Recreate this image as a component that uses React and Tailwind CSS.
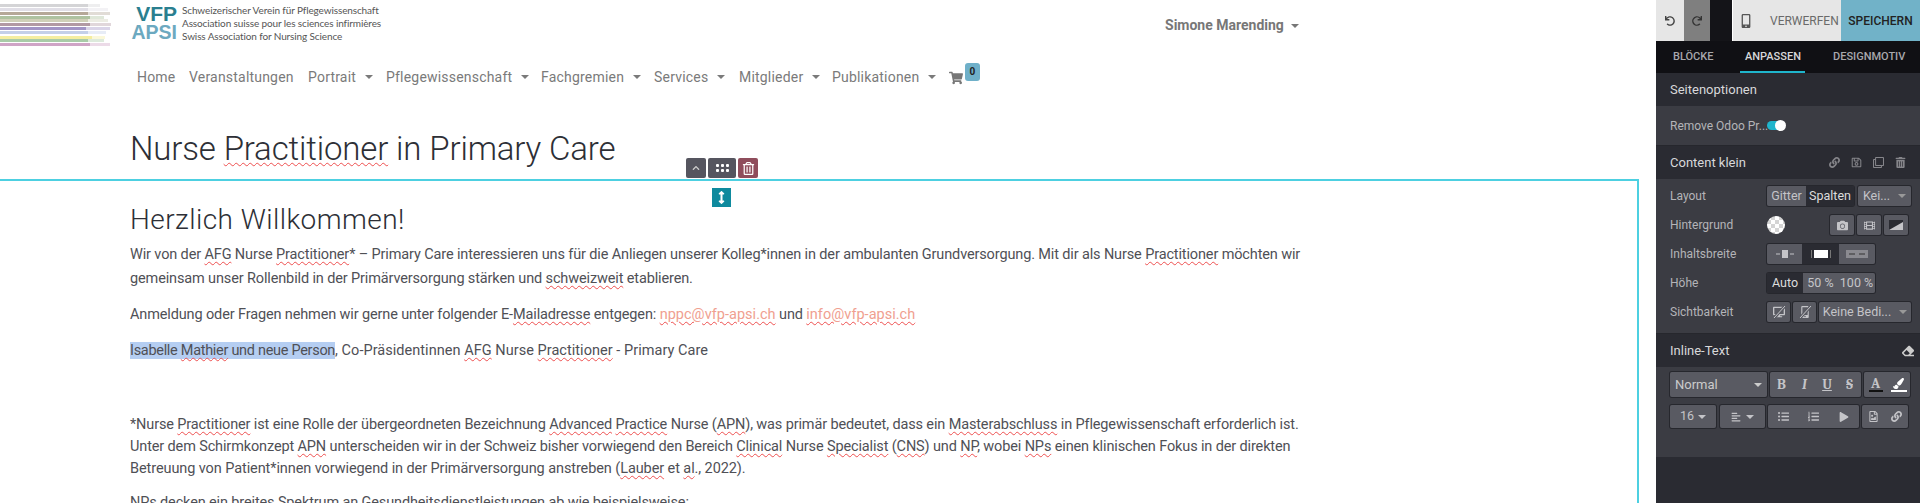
import {
  FaUndo, FaRedo, FaMobileAlt, FaShoppingCart, FaLink, FaRegSave, FaRegClone, FaTrashAlt, FaRegTrashAlt, FaCamera, FaFilm,
  FaEraser, FaListUl, FaListOl, FaPlay, FaAlignLeft,
  FaRegFileImage, FaChevronUp, FaArrowsAltV, FaPaintBrush, FaDesktop,
} from "react-icons/fa";

const font = { fontFamily: "Roboto, sans-serif" };

// colour, y, solid width, faded width
const stripes = [
  ["#d4d4d6", 4, 88, 100], ["#e0dee6", 8, 88, 108], ["#b5a898", 12, 88, 110], ["#aec2a0", 16, 90, 104], ["#d0d0b8", 19, 88, 108],
  ["#b39aa4", 23, 90, 111], ["#a294c6", 27, 86, 110], ["#c4d0e8", 31, 88, 106], ["#f4eea0", 36, 92, 105],
  ["#a9cba8", 39, 88, 104], ["#cfa4c6", 43, 90, 110],
];

function Sp({ children }) {
  return <span className="underline decoration-wavy decoration-[#ee4f4f] decoration-1 underline-offset-2">{children}</span>;
}

function Caret({ className = "" }) {
  return <span className={`inline-block border-x-[4px] border-t-[4px] border-x-transparent border-t-current ${className}`} />;
}

function NavItem({ label, caret, className = "" }) {
  return (
    <span className={`flex items-center gap-[9px] whitespace-nowrap ${className}`}>
      {label}
      {caret && <Caret />}
    </span>
  );
}

function Header() {
  return (
    <>
      <div className="h-[51px] flex items-start relative">
        <svg width="112" height="46" className="shrink-0">
          {stripes.map(([c, y, w, w2]) => (
            <g key={y}>
              <rect x="0" y={y} width={w2} height="3" fill={c} opacity="0.4" />
              <rect x="0" y={y} width={w} height="3" fill={c} />
            </g>
          ))}
        </svg>
        <div className="ml-[16px] w-[50px] shrink-0 font-bold text-right" style={{ fontFamily: "Liberation Sans, sans-serif" }}>
          <div className="text-[#2a7f8f] text-[21px] leading-[18px] mt-[5px] pr-[1px]">VFP</div>
          <div className="text-[#6ca9c0] text-[19.5px] leading-[18px] pr-[1px]">APSI</div>
        </div>
        <div className="ml-[4px] mt-[4px] text-[#555] text-[10px] leading-[13px] tracking-[-0.12px] whitespace-nowrap" style={{ fontFamily: "Lato, sans-serif" }}>
          <div>Schweizerischer Verein für Pflegewissenschaft</div>
          <div>Association suisse pour les sciences infirmières</div>
          <div>Swiss Association for Nursing Science</div>
        </div>
        <div className="ml-[784px] mt-[15px] flex items-center gap-[7px] text-[14px] font-bold text-[#777]">
          Simone Marending
          <Caret />
        </div>
      </div>
      <nav className="h-[50px] pl-[137px] pt-[17px] flex items-start text-[14px] leading-[18px] text-[#7a7a7a] tracking-[0.2px]">
        <NavItem label="Home" className="w-[52px]" />
        <NavItem label="Veranstaltungen" className="w-[119px]" />
        <NavItem label="Portrait" caret className="w-[78px]" />
        <NavItem label="Pflegewissenschaft" caret className="w-[155px]" />
        <NavItem label="Fachgremien" caret className="w-[113px]" />
        <NavItem label="Services" caret className="w-[85px]" />
        <NavItem label="Mitglieder" caret className="w-[93px]" />
        <NavItem label="Publikationen" caret className="w-[117px]" />
        <span className="relative">
          <FaShoppingCart className="text-[14px] mt-[3px] text-[#777]" />
          <span className="absolute left-[16px] top-[-5px] w-[15px] h-[18px] rounded-[3px] bg-[#6fb0c9] text-[#222] text-[10px] leading-[18px] font-bold text-center">0</span>
        </span>
      </nav>
      <h1 className="h-[78px] pl-[130px] pt-[26px] text-[33px] font-light leading-[44px] text-[#2d2f36] tracking-[-0.15px] whitespace-nowrap">
        Nurse <Sp>Practitioner</Sp> in Primary Care
      </h1>
    </>
  );
}

function Section() {
  return (
    <section className="relative w-[1639px] h-[324px] border-t-2 border-r-2 border-[#4dd0e1] pl-[130px] whitespace-nowrap text-[14.5px] leading-[24px] text-[#4f5056] tracking-[-0.135px]">
      <div className="absolute left-[686px] top-[-23px] flex gap-[2px] text-white">
        <button className="w-[20px] h-[20px] rounded-[2px] bg-[#55555f] flex items-center justify-center text-[#ccc]"><FaChevronUp size={8} /></button>
        <button className="w-[28px] h-[20px] rounded-[2px] bg-[#55555f] flex items-center justify-center">
          <svg width="13" height="9" fill="currentColor">
            <rect x="0" y="0" width="3" height="3" rx="1" /><rect x="5" y="0" width="3" height="3" rx="1" /><rect x="10" y="0" width="3" height="3" rx="1" />
            <rect x="0" y="5" width="3" height="3" rx="1" /><rect x="5" y="5" width="3" height="3" rx="1" /><rect x="10" y="5" width="3" height="3" rx="1" />
          </svg>
        </button>
        <button className="w-[20px] h-[20px] rounded-[2px] bg-[#8f4d5c] flex items-center justify-center"><FaRegTrashAlt size={13} /></button>
      </div>
      <div className="absolute left-[712px] top-[7px] w-[19px] h-[19px] bg-[#0e8a9e] flex items-center justify-center text-white">
        <FaArrowsAltV size={13} />
      </div>
      <h2 className="pt-[21px] text-[28px] font-light leading-[36px] text-[#2d2f36] tracking-[0.45px]">Herzlich Willkommen!</h2>
      <p className="mt-[5px] mb-[12px]">
        Wir von der <Sp>AFG</Sp> Nurse <Sp>Practitioner</Sp>* – Primary Care interessieren uns für die Anliegen unserer Kolleg*innen in der ambulanten Grundversorgung. Mit dir als Nurse <Sp>Practitioner</Sp> möchten wir
        <br />
        gemeinsam unser Rollenbild in der Primärversorgung stärken und <Sp>schweizweit</Sp> etablieren.
      </p>
      <p className="mb-[12px]">
        Anmeldung oder Fragen nehmen wir gerne unter folgender E-<Sp>Mailadresse</Sp> entgegen: <span className="text-[#f0a090] tracking-[0.02px]"><Sp>nppc@vfp-apsi.ch</Sp></span> und <span className="text-[#f0a090] tracking-[0.02px]"><Sp>info@vfp-apsi.ch</Sp></span>
      </p>
      <p className="mb-[12px]">
        <span className="bg-[#b5cef2] tracking-[-0.3px]">Isabelle <Sp>Mathier</Sp> und neue Person</span>
        <span className="tracking-[0.04px]">, Co-Präsidentinnen <Sp>AFG</Sp> Nurse <Sp>Practitioner</Sp> - Primary Care</span>
      </p>
      <p className="h-[24px] mb-[15px]" />
      <p className="mb-[11px] leading-[22px]">
        *Nurse <Sp>Practitioner</Sp> ist eine Rolle der übergeordneten Bezeichnung <Sp>Advanced</Sp> <Sp>Practice</Sp> Nurse (<Sp>APN</Sp>), was primär bedeutet, dass ein <Sp>Masterabschluss</Sp> in Pflegewissenschaft erforderlich ist.
        <br />
        Unter dem Schirmkonzept <Sp>APN</Sp> unterscheiden wir in der Schweiz bisher vorwiegend den Bereich <Sp>Clinical</Sp> Nurse <Sp>Specialist</Sp> (<Sp>CNS</Sp>) und <Sp>NP</Sp>, wobei <Sp>NPs</Sp> einen klinischen Fokus in der direkten
        <br />
        <span className="tracking-[-0.09px]">Betreuung von Patient*innen vorwiegend in der Primärversorgung anstreben (<Sp>Lauber</Sp> et <Sp>al</Sp>., 2022).</span>
      </p>
      <p>NPs decken ein breites Spektrum an Gesundheitsdienstleistungen ab wie beispielsweise:</p>
    </section>
  );
}

function Btn({ children, className = "", active }) {
  return (
    <button className={`h-full flex items-center text-[12.5px] whitespace-nowrap ${active ? "bg-[#2a2b32] text-[#ddd]" : "bg-[#595a62] text-[#c4c4c8]"} ${className} justify-center`}>
      {children}
    </button>
  );
}

function Group({ children, className = "" }) {
  return <div className={`flex h-full rounded-[2px] overflow-hidden shadow-[0_0_0_1px_#26272d] ${className}`}>{children}</div>;
}

function Row({ label, children }) {
  return (
    <div className="h-[20px] mb-[9px] flex items-center">
      <span className="w-[97px] text-[12px] text-[#b4b4b8]">{label}</span>
      <div className="flex h-full gap-[3px] flex-1">{children}</div>
    </div>
  );
}

function SectionHead({ title, children }) {
  return (
    <div className="h-[33px] bg-[#2a2b32] px-[14px] flex items-center justify-between text-[13px] text-[#d8d8da]">
      {title}
      {children}
    </div>
  );
}

function Slashed({ children }) {
  return (
    <span className="relative flex items-center justify-center">
      {children}
      <svg width="14" height="14" className="absolute">
        <path d="M2 13 L13 1" stroke="#595a62" strokeWidth="3" />
        <path d="M2 13 L13 1" stroke="#c4c4c8" strokeWidth="1" />
      </svg>
    </span>
  );
}

function Sidebar() {
  return (
    <aside className="w-[264px] shrink-0 h-[503px] bg-[#2a2b32] flex flex-col overflow-hidden">
      <div className="h-[41px] flex bg-white">
        <button className="w-[28px] bg-[#e6e6e6] flex items-center justify-center text-[#444]"><FaUndo size={10} /></button>
        <button className="w-[26px] bg-[#7f7f7f] flex items-center justify-center text-[#333]"><FaRedo size={10} /></button>
        <div className="w-[22px] bg-[#141418]" />
        <div className="w-[1px] bg-white" />
        <div className="flex-1 bg-[#e6e6e6] flex items-center text-[12px] text-[#6a6a6a] whitespace-nowrap">
          <FaMobileAlt size={14} className="ml-[6px] mr-[17px] text-[#555]" />
          VERWERFEN
        </div>
        <div className="w-[79px] bg-[#71b2c8] flex items-center justify-center text-[12px] text-[#222] font-medium">SPEICHERN</div>
      </div>
      <div className="h-[32px] bg-[#101014] flex items-center text-[11px] font-medium text-[#a8a8ac] relative whitespace-nowrap">
        <span className="ml-[17px] w-[72px]">BLÖCKE</span>
        <span className="w-[88px] text-[#d8d8da]">ANPASSEN</span>
        <span>DESIGNMOTIV</span>
        <span className="absolute left-[84px] bottom-0 w-[65px] h-[2px] bg-[#1fb5cc]" />
      </div>
      <SectionHead title="Seitenoptionen" />
      <div className="h-[40px] bg-[#3b3c43] border-b border-[#26272d] px-[14px] flex items-center text-[12px] text-[#b4b4b8] whitespace-nowrap">
        <span className="w-[97px]">Remove Odoo Pr...</span>
        <span className="relative w-[18px] h-[9px] rounded-full bg-[#1fb5cc]">
          <span className="absolute right-[-1px] top-[-1px] w-[11px] h-[11px] rounded-full bg-white" />
        </span>
      </div>
      <SectionHead title="Content klein">
        <span className="flex gap-[11px] text-[#85858a]">
          <FaLink size={11} />
          <FaRegSave size={11} />
          <FaRegClone size={11} />
          <FaTrashAlt size={11} />
        </span>
      </SectionHead>
      <div className="h-[155px] bg-[#3b3c43] border-b border-[#26272d] px-[14px] pr-[9px] pt-[7px]">
        <Row label="Layout">
          <Group>
            <Btn className="w-[39px]">Gitter</Btn>
            <Btn className="w-[48px]" active>Spalten</Btn>
          </Group>
          <Group className="ml-[1px]">
            <Btn className="w-[53px] gap-[8px]">Kei... <Caret className="text-[#999]" /></Btn>
          </Group>
        </Row>
        <Row label="Hintergrund">
          <span className="w-[18px] h-[18px] mt-[1px] rounded-full bg-[repeating-conic-gradient(#d4d4d4_0_25%,#ffffff_0_50%)] bg-[length:8px_8px]" />
          <Group className="ml-[42px]"><Btn className="w-[24px]"><FaCamera size={11} /></Btn></Group>
          <Group><Btn className="w-[24px]"><FaFilm size={11} /></Btn></Group>
          <Group><Btn className="w-[24px]"><svg width="14" height="10"><rect width="14" height="10" fill="#2a2b32" /><path d="M0 10 L14 2 V10Z" fill="#c4c4c8" /></svg></Btn></Group>
        </Row>
        <Row label="Inhaltsbreite">
          <Group>
            <Btn className="w-[35px]"><svg width="20" height="8"><rect x="7" y="0" width="6" height="8" fill="currentColor" /><path d="M1 4h4M15 4h4" stroke="currentColor" /></svg></Btn>
            <Btn className="w-[37px]" active><svg width="20" height="8"><rect x="3" y="0" width="14" height="8" fill="#fff" /><path d="M.5 0v8M19.5 0v8" stroke="#777" /></svg></Btn>
            <Btn className="w-[36px]"><svg width="22" height="8"><rect x="0" y="0" width="22" height="8" fill="#8a8a90" /><path d="M3 4h6M13 4h6" stroke="#333" /></svg></Btn>
          </Group>
        </Row>
        <Row label="Höhe">
          <Group>
            <Btn className="w-[36px]" active>Auto</Btn>
            <Btn className="w-[35px]">50 %</Btn>
            <Btn className="w-[37px]">100 %</Btn>
          </Group>
        </Row>
        <Row label="Sichtbarkeit">
          <Group><Btn className="w-[23px]"><Slashed><FaDesktop size={12} /></Slashed></Btn></Group>
          <Group><Btn className="w-[23px]"><Slashed><FaMobileAlt size={12} /></Slashed></Btn></Group>
          <Group className="flex-1"><Btn className="flex-1 gap-[8px]">Keine Bedi... <Caret className="text-[#999]" /></Btn></Group>
        </Row>
      </div>
      <SectionHead title="Inline-Text"><FaEraser size={12} className="text-[#ccc] -mr-[8px]" /></SectionHead>
      <div className="h-[90px] bg-[#3b3c43] px-[14px] pr-[9px] pt-[5px] flex flex-col gap-[8px]">
        <div className="h-[25px] flex gap-[3px]">
          <Group>
            <Btn className="w-[97px] text-[#ccc]">
              <span className="flex-1 text-left pl-[5px] text-[13px]">Normal</span>
              <Caret className="mr-[5px]" />
            </Btn>
          </Group>
          <Group>
            <Btn className="w-[23px]"><span className="font-serif font-bold text-[14px]">B</span></Btn>
            <Btn className="w-[23px]"><span className="font-serif italic font-bold text-[14px]">I</span></Btn>
            <Btn className="w-[22px]"><span className="font-serif font-bold text-[14px] underline">U</span></Btn>
            <Btn className="w-[23px]"><span className="font-serif font-bold text-[14px] line-through">S</span></Btn>
          </Group>
          <Group>
            <Btn className="w-[23px] flex-col"><span className="leading-[12px] font-serif font-bold text-[14px]">A</span><span className="w-[14px] h-[2px] bg-[#111]" /></Btn>
            <Btn className="w-[23px] flex-col"><FaPaintBrush size={11} className="text-white" /><span className="w-[16px] h-[2px] bg-white mt-[1px]" /></Btn>
          </Group>
        </div>
        <div className="h-[23px] flex gap-[3px]">
          <Group><Btn className="w-[46px] gap-[4px]">16 <Caret /></Btn></Group>
          <Group className="ml-[1px]"><Btn className="w-[45px] gap-[5px]"><FaAlignLeft size={10} /> <Caret /></Btn></Group>
          <Group>
            <Btn className="w-[30px]"><FaListUl size={11} /></Btn>
            <Btn className="w-[30px]"><FaListOl size={11} /></Btn>
            <Btn className="w-[31px]"><FaPlay size={10} /></Btn>
          </Group>
          <Group>
            <Btn className="w-[23px]"><FaRegFileImage size={11} /></Btn>
            <Btn className="w-[23px]"><FaLink size={11} /></Btn>
          </Group>
        </div>
      </div>
    </aside>
  );
}

export default function App() {
  return (
    <div className="w-[1920px] h-[503px] flex overflow-hidden bg-white" style={font}>
      <main className="w-[1656px] shrink-0">
        <Header />
        <Section />
      </main>
      <Sidebar />
    </div>
  );
}
